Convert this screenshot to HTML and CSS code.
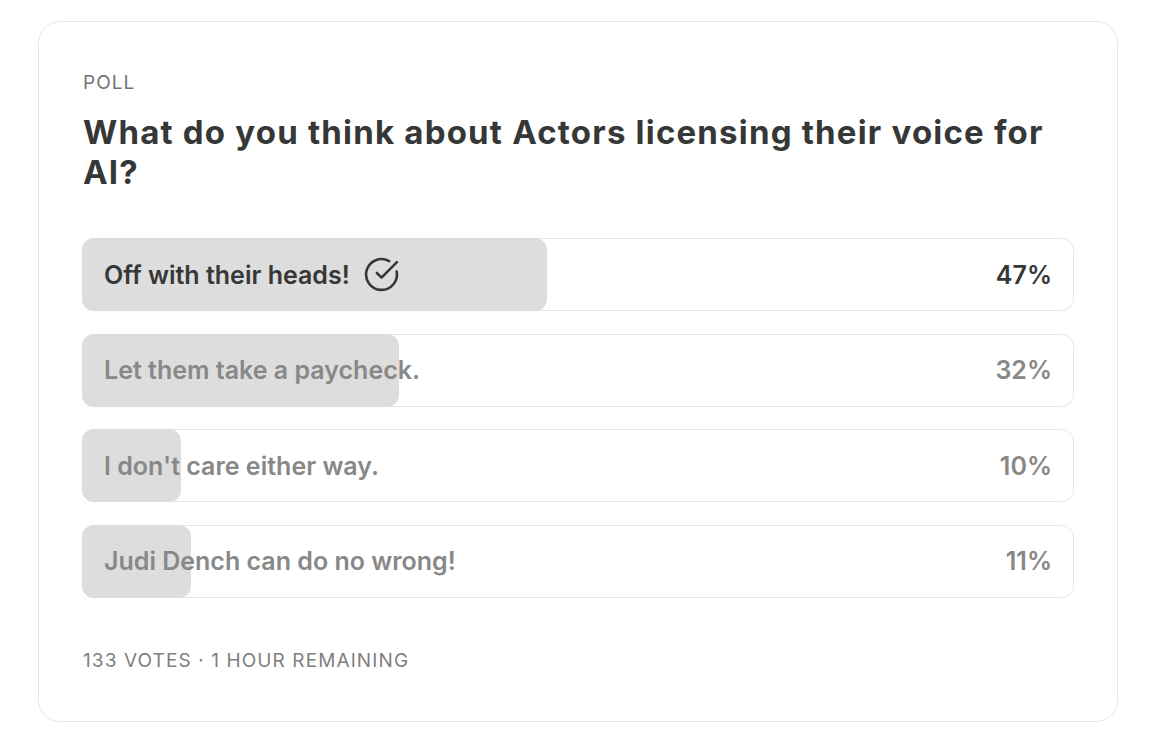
FILE: index.html
```html
<!DOCTYPE html>
<html lang="en">
<head>
<meta charset="utf-8">
<title>Poll</title>
<link rel="stylesheet" href="styles.css">
</head>
<body>
<div class="card">
  <div class="label">POLL</div>
  <h2 class="question">What do you think about Actors licensing their voice for AI?</h2>
  <div class="options">
    <div class="option selected">
      <div class="fill" style="width: 47%"></div>
      <div class="option-text">Off with their heads!
        <svg class="check" viewBox="0 0 24 24" width="37" height="37" fill="none" stroke="currentColor" stroke-width="1.7" stroke-linecap="round" stroke-linejoin="round"><path d="M21.801 10A10 10 0 1 1 17 3.335"/><path d="m9 11 3 3L22 4"/></svg>
      </div>
      <div class="pct">47%</div>
    </div>
    <div class="option">
      <div class="fill" style="width: 32%"></div>
      <div class="option-text">Let them take a paycheck.</div>
      <div class="pct">32%</div>
    </div>
    <div class="option">
      <div class="fill" style="width: 10%"></div>
      <div class="option-text">I don't care either way.</div>
      <div class="pct">10%</div>
    </div>
    <div class="option">
      <div class="fill" style="width: 11%"></div>
      <div class="option-text">Judi Dench can do no wrong!</div>
      <div class="pct">11%</div>
    </div>
  </div>
  <div class="footer">133 VOTES · 1 HOUR REMAINING</div>
</div>
</body>
</html>
```
FILE: styles.css
```css
* { box-sizing: border-box; }
html, body { margin: 0; padding: 0; background: #ffffff; }
body {
  font-family: Inter, "Noto Sans", "Liberation Sans", sans-serif;
  padding: 21px 0 0 38px;
}
.card {
  width: 1080px;
  height: 701px;
  border: 1px solid #e6e6e6;
  border-radius: 22px;
  padding: 50px 43px 0 43px;
}
.label {
  font-size: 19px;
  line-height: 22px;
  letter-spacing: 1px;
  color: #737373;
  padding-left: 1px;
}
.question {
  margin: 18px 0 0 0;
  padding-left: 1px;
  font-size: 33px;
  line-height: 40px;
  font-weight: 700;
  color: #363737;
  letter-spacing: 1.2px;
}
.options {
  margin-top: 46px;
  display: flex;
  flex-direction: column;
  gap: 22.5px;
}
.option {
  position: relative;
  height: 73px;
  border: 1px solid #e6e6e6;
  border-radius: 12px;
  display: flex;
  align-items: center;
  justify-content: space-between;
  padding: 0 21px 0 21px;
  font-size: 25px;
  font-weight: 600;
  color: #888888;
}
.fill {
  position: absolute;
  left: -1px;
  top: -1px;
  bottom: -1px;
  background: #dddddd;
  border-radius: 12px;
}
.option-text, .pct {
  position: relative;
  display: flex;
  align-items: center;
}
.option.selected { color: #363737; }
.check {
  margin-left: 13px;
  color: #363737;
}
.footer {
  margin-top: 52px;
  padding-left: 1px;
  font-size: 19px;
  line-height: 22px;
  letter-spacing: 1.1px;
  color: #808080;
}
```
